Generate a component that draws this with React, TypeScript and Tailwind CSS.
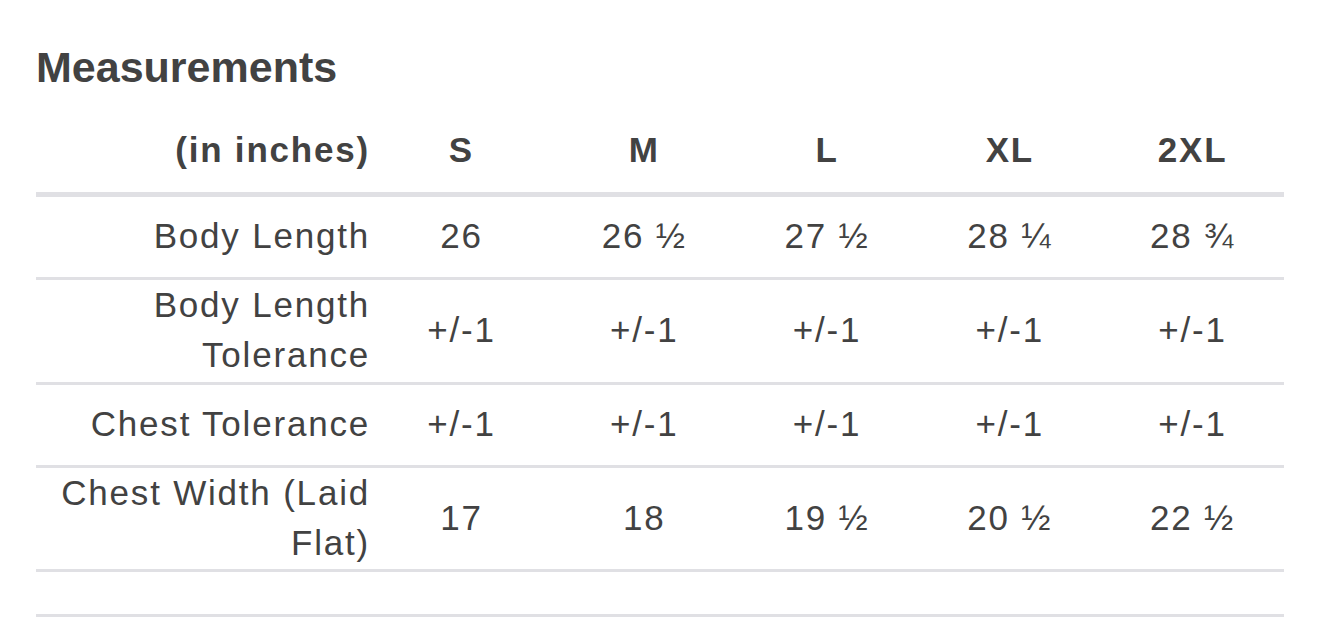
import React from "react";

const sizes = ["S", "M", "L", "XL", "2XL"];

const rows = [
  { label: "Body Length", values: ["26", "26 ½", "27 ½", "28 ¼", "28 ¾"], h: "h-[83px]" },
  { label: "Body Length Tolerance", values: ["+/-1", "+/-1", "+/-1", "+/-1", "+/-1"], h: "h-[105px]" },
  { label: "Chest Tolerance", values: ["+/-1", "+/-1", "+/-1", "+/-1", "+/-1"], h: "h-[83px]" },
  { label: "Chest Width (Laid Flat)", values: ["17", "18", "19 ½", "20 ½", "22 ½"], h: "h-[104px]" },
];

export default function App() {
  return (
    <div className="min-h-screen bg-white px-[36px] pt-[42px] font-['Liberation_Sans',Arial,sans-serif] text-[#424242]">
      <h2 className="text-[43px] leading-[50px] font-bold">Measurements</h2>
      <div className="w-[1248px] text-[35px] leading-[50px] tracking-[1.8px]">
        <div className="grid h-[105px] grid-cols-[334px_repeat(5,1fr)] items-end border-b-[5px] border-[#e0e0e4] pb-[17px] font-bold">
          <div className="text-right">(in inches)</div>
          {sizes.map((s) => (
            <div key={s} className="text-center">{s}</div>
          ))}
        </div>
        {rows.map((row) => (
          <div key={row.label} className={`grid ${row.h} grid-cols-[334px_repeat(5,1fr)] items-center border-b-[3px] border-[#e0e0e4] pb-[3px]`}>
            <div className="text-right">{row.label}</div>
            {row.values.map((v, i) => (
              <div key={i} className="text-center">{v}</div>
            ))}
          </div>
        ))}
        <div className="h-[45px] border-b-[3px] border-[#e0e0e4]" />
      </div>
    </div>
  );
}
